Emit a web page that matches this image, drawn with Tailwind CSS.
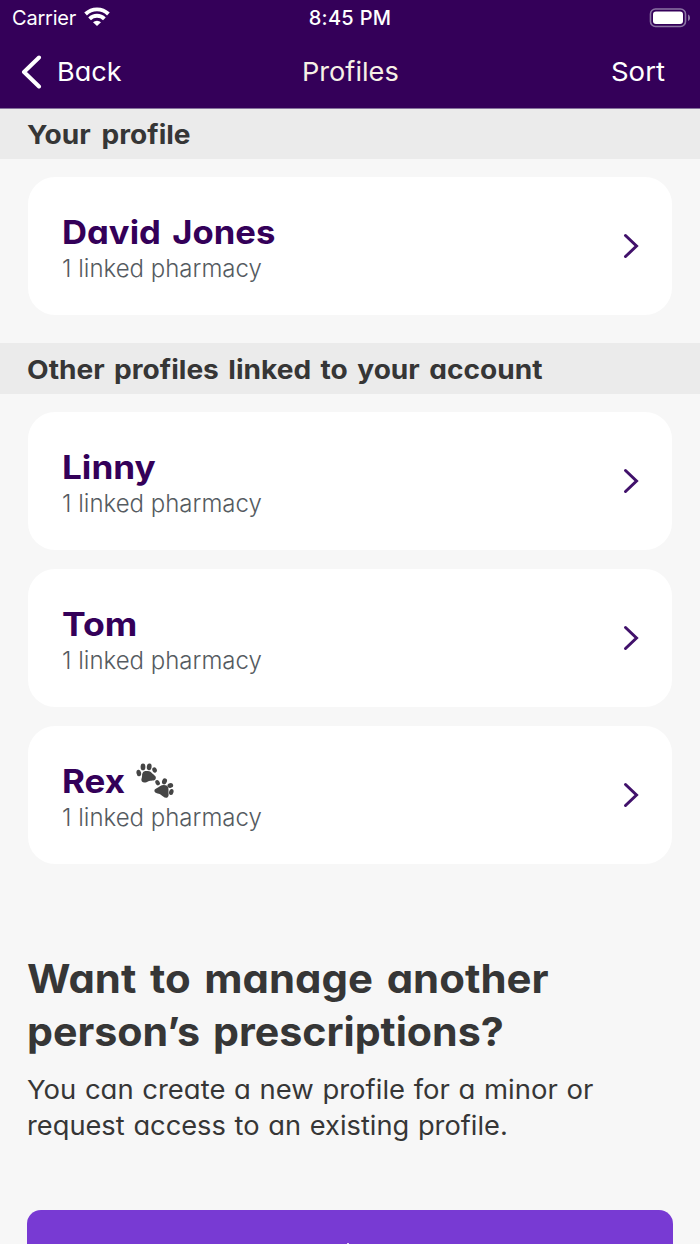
<!DOCTYPE html>
<html lang="en"><head><meta charset="utf-8"><title>Profiles</title>
<script src="https://cdn.jsdelivr.net/npm/@tailwindcss/browser@4"></script></head>
<body class="h-[1244px] w-[700px] overflow-hidden bg-[#f7f7f7] font-['Inter',sans-serif] text-[#363636] [font-feature-settings:'cv11']">
<header class="h-[109px] border-b border-[#85729c] bg-[#340059] text-white">
  <div class="grid h-[36px] grid-cols-3 items-center px-[10px] text-[20px]">
    <div class="flex items-center gap-[8px] pl-[2px] [font-feature-settings:normal]"><span class="tracking-[-0.2px]">Carrier</span>
      <svg class="-mt-[3px]" width="26" height="19" viewBox="0 0 26 19" fill="none" stroke="white" stroke-width="3.9"><path d="M1.600 7a16.400 16.400 0 0 1 22.800 0M5.600 11.800a10.600 10.600 0 0 1 14.800 0"/><path d="M13 19l-4-3.700a5.800 5.800 0 0 1 8 0z" fill="white" stroke="none"/></svg>
    </div>
    <div class="text-center font-medium tracking-[0.3px]">8:45 PM</div>
    <svg class="-mt-[1px] justify-self-end" width="41" height="20" viewBox="0 0 41 20" fill="none"><rect x="1.500" y="1" width="35" height="17.500" rx="5" stroke="#8b74a3" stroke-width="1.600"/><rect x="4" y="3.500" width="30" height="12.500" rx="3" fill="white"/><path d="M39 6.500c2.700 1 2.700 5.500 0 6.500z" fill="#8b74a3"/></svg>
  </div>
  <div class="grid h-[71px] grid-cols-3 items-center px-[21px] text-[26px]">
    <div class="flex items-center gap-[15px]"><svg width="21" height="34" viewBox="0 0 21 34" fill="none" stroke="white" stroke-width="4" stroke-linecap="round" stroke-linejoin="round"><path d="M18 2.500L3 17l15 14.500"/></svg><span class="inline-block origin-left scale-x-[1.04]">Back</span></div>
    <div class="text-center text-[#f7f0e6]"><span class="inline-block scale-x-[1.045]">Profiles</span></div>
    <div class="pr-[14px] text-right"><span class="inline-block origin-right scale-x-[1.06]">Sort</span></div>
  </div>
</header>
<main>
  <h2 class="h-[50px] bg-[#ebebeb] pl-[27px] text-[26px] font-bold leading-[52px]"><span class="inline-block origin-left scale-x-[1.08] [word-spacing:4px]">Your profile</span></h2>
  <section class="px-7 pt-[18px] pb-7">
    <article class="flex h-[138px] items-center justify-between rounded-[27px] bg-white pl-[34px] pr-[33px]">
      <div class="pt-1"><h3 class="text-[33px] font-bold leading-[40px] text-[#340059]"><span class="inline-block origin-left scale-x-[1.05] [word-spacing:3px]">David Jones</span></h3><p class="text-[24px] font-light leading-[33px] text-[#555b61] [font-feature-settings:normal]">1 linked pharmacy</p></div>
      <svg width="16" height="26" viewBox="0 0 16 26" fill="none" stroke="#41116b" stroke-width="3" stroke-linecap="round"><path d="M2.500 2.500L13.500 13L2.500 23.500"/></svg>
    </article>
  </section>
  <h2 class="h-[51px] bg-[#ebebeb] pl-[27px] text-[26px] font-bold leading-[54px]"><span class="inline-block origin-left scale-x-[1.08] [word-spacing:2.6px]">Other profiles linked to your account</span></h2>
  <section class="flex flex-col gap-[19px] px-7 pt-[18px]">
    <article class="flex h-[138px] items-center justify-between rounded-[27px] bg-white pl-[34px] pr-[33px]">
      <div class="pt-1"><h3 class="text-[33px] font-bold leading-[40px] text-[#340059]"><span class="inline-block origin-left scale-x-[1.065]">Linny</span></h3><p class="text-[24px] font-light leading-[33px] text-[#555b61] [font-feature-settings:normal]">1 linked pharmacy</p></div>
      <svg width="16" height="26" viewBox="0 0 16 26" fill="none" stroke="#41116b" stroke-width="3" stroke-linecap="round"><path d="M2.500 2.500L13.500 13L2.500 23.500"/></svg>
    </article>
    <article class="flex h-[138px] items-center justify-between rounded-[27px] bg-white pl-[34px] pr-[33px]">
      <div class="pt-1"><h3 class="text-[33px] font-bold leading-[40px] text-[#340059]"><span class="inline-block origin-left scale-x-[1.08]">Tom</span></h3><p class="text-[24px] font-light leading-[33px] text-[#555b61] [font-feature-settings:normal]">1 linked pharmacy</p></div>
      <svg width="16" height="26" viewBox="0 0 16 26" fill="none" stroke="#41116b" stroke-width="3" stroke-linecap="round"><path d="M2.500 2.500L13.500 13L2.500 23.500"/></svg>
    </article>
    <article class="flex h-[138px] items-center justify-between rounded-[27px] bg-white pl-[34px] pr-[33px]">
      <div class="pt-1"><h3 class="flex items-center gap-[15px] text-[33px] font-bold leading-[40px] text-[#340059]"><span class="inline-block origin-left scale-x-[1.06]">Rex</span>
        <svg width="38" height="36" viewBox="0 0 38 36" fill="#454545"><path d="M11 8c-3.800-.5-5 2-4.900 4.700 .1 2-1.600 3.800-.2 5.800 1.700 2 4.700 .8 6.500-.3 2-1 6-.1 7.200-2.300 1.200-2.400-1.400-3.600-3-5.100-1.500-1.600-2.500-3-5.600-2.800z"/><ellipse cx="2.800" cy="10" rx="2.300" ry="3.300" transform="rotate(-12 2.800 10)"/><ellipse cx="7" cy="3.900" rx="2.400" ry="3.400"/><ellipse cx="13.200" cy="3.800" rx="2.400" ry="3.400" transform="rotate(8 13.200 3.800)"/><ellipse cx="18.600" cy="7" rx="2.200" ry="2.700" transform="rotate(-25 18.600 7)"/><path d="M27.800 22c-3.100 0-4.200 1.600-5.800 2.500-1.800 1-3.900 1.500-3.600 3.600 .4 2.600 4.100 2.100 6.100 3.300 1.900 1.200 4.400 4.200 6.900 3 2-1.200 .9-4 1.100-6.100 .2-3.300 0-6.100-4.700-6.300z"/><ellipse cx="21.600" cy="19.700" rx="2.100" ry="2.800" transform="rotate(-30 21.600 19.700)"/><ellipse cx="28.500" cy="18.300" rx="2.400" ry="3.100" transform="rotate(20 28.500 18.300)"/><ellipse cx="34.300" cy="22.500" rx="2.900" ry="2.400" transform="rotate(-15 34.300 22.500)"/><ellipse cx="35.300" cy="29" rx="2.200" ry="3.100" transform="rotate(15 35.300 29)"/></svg></h3><p class="text-[24px] font-light leading-[33px] text-[#555b61] [font-feature-settings:normal]">1 linked pharmacy</p></div>
      <svg width="16" height="26" viewBox="0 0 16 26" fill="none" stroke="#41116b" stroke-width="3" stroke-linecap="round"><path d="M2.500 2.500L13.500 13L2.500 23.500"/></svg>
    </article>
  </section>
  <section class="px-[27px] pt-[88px]">
    <h2 class="flex flex-col items-start whitespace-nowrap text-[40px] font-bold leading-[53px]"><span class="origin-left scale-x-[1.048] [word-spacing:3.6px]">Want to manage another</span><span class="origin-left scale-x-[1.029] [word-spacing:3px]">person’s prescriptions?</span></h2>
    <p class="mt-[14px] flex flex-col items-start whitespace-nowrap text-[26px] leading-[36px]"><span class="origin-left scale-x-[1.056] [word-spacing:0.9px]">You can create a new profile for a minor or</span><span class="origin-left scale-x-[1.048] [word-spacing:1px]">request access to an existing profile.</span></p>
    <div class="mt-[66px] flex h-[34px] items-end justify-center rounded-t-[14px] bg-[#783ad3]"><i class="mr-[4px] h-px w-[2px] bg-white/80"></i></div>
  </section>
</main>
</body></html>
